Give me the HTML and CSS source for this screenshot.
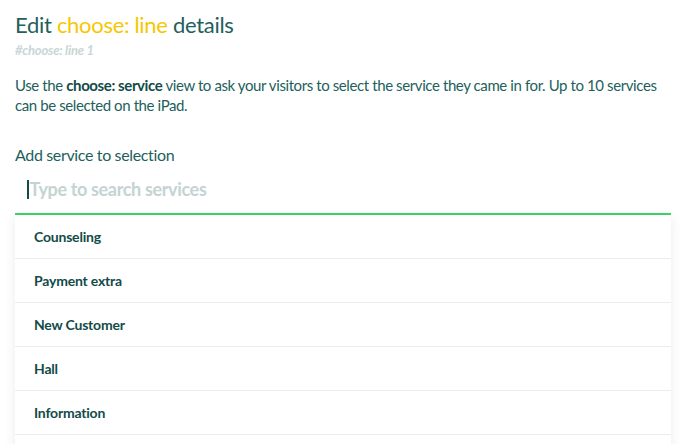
FILE: index.html
```html
<!DOCTYPE html>
<html>
<head>
<meta charset="utf-8">
<link rel="stylesheet" href="styles.css">
</head>
<body>
<div class="page">
  <h1 class="title">Edit <span class="hl">choose: line</span> details</h1>
  <div class="slug">#choose: line 1</div>
  <p class="desc">Use the <b>choose: service</b> view to ask your visitors to select the service they came in for. Up to 10 services can be selected on the iPad.</p>
  <div class="label">Add service to selection</div>
  <div class="search">
    <span class="caret"></span><span class="placeholder">Type to search services</span>
  </div>
  <ul class="list">
    <li class="item">Counseling</li>
    <li class="item">Payment extra</li>
    <li class="item">New Customer</li>
    <li class="item">Hall</li>
    <li class="item">Information</li>
    <li class="item"></li>
  </ul>
</div>
</body>
</html>
```
FILE: styles.css
```css
html, body {
  margin: 0;
  padding: 0;
  background: #ffffff;
  overflow: hidden;
}
body {
  font-family: "Lato", "Open Sans", sans-serif;
  color: #225f5c;
}
.page {
  padding: 10px 17px 0 15px;
}
.title {
  margin: 0;
  font-size: 22px;
  font-weight: 400;
  letter-spacing: -0.3px;
  line-height: 30px;
  color: #22605d;
}
.hl {
  color: #f6c700;
}
.slug {
  margin-top: 2px;
  font-size: 13px;
  font-style: italic;
  font-weight: 700;
  letter-spacing: -0.2px;
  color: #c9d6d5;
  line-height: 16px;
}
.desc {
  margin: 17px 0 0 0;
  font-size: 15px;
  letter-spacing: -0.4px;
  line-height: 20px;
  color: #225f5c;
}
.desc b {
  color: #134b48;
}
.label {
  margin-top: 30px;
  font-size: 16px;
  letter-spacing: -0.35px;
  line-height: 20px;
}
.search {
  display: flex;
  align-items: center;
  height: 48px;
  padding-left: 12px;
  border-bottom: 2px solid #3ed46b;
}
.caret {
  width: 1.5px;
  height: 19px;
  background: #134b48;
  margin-right: 1px;
}
.placeholder {
  font-size: 18px;
  font-weight: 700;
  letter-spacing: -0.35px;
  color: #c3d4d3;
}
.list {
  list-style: none;
  margin: 0;
  padding: 0;
  box-shadow: 0 2px 12px rgba(0, 0, 0, 0.08);
  background: #fff;
}
.item {
  height: 43px;
  line-height: 43px;
  padding-left: 19px;
  font-size: 14px;
  font-weight: 700;
  letter-spacing: -0.2px;
  color: #124b47;
  border-bottom: 1.3px solid #e8eeed;
}
```
